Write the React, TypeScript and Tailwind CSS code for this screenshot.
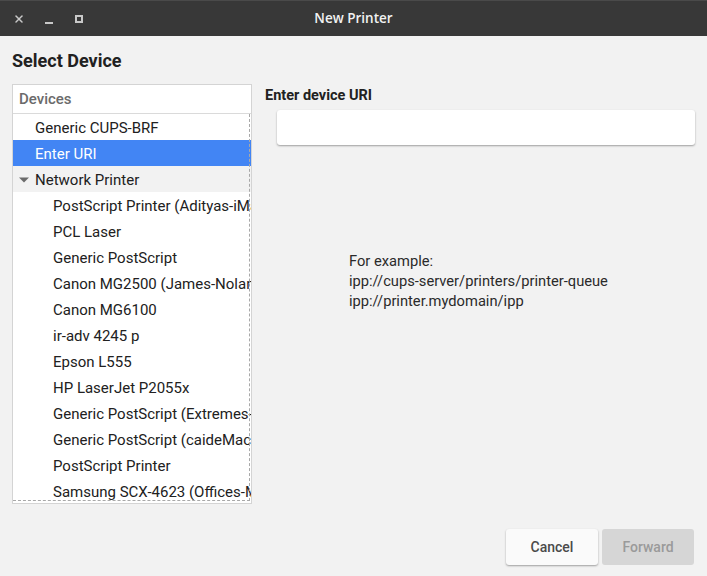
import { X } from "lucide-react";

const children = [
  "PostScript Printer (Adityas-iMac)",
  "PCL Laser",
  "Generic PostScript",
  "Canon MG2500 (James-Nolan-MacBook)",
  "Canon MG6100",
  "ir-adv 4245 p",
  "Epson L555",
  "HP LaserJet P2055x",
  "Generic PostScript (Extremes-MacBook)",
  "Generic PostScript (caideMacBook)",
  "PostScript Printer",
  "Samsung SCX-4623 (Offices-Mac)",
];

function TitleBar() {
  return (
    <div className="relative flex h-9 items-center border-t border-[#4a4a4a] bg-[#383838]">
      <div className="flex items-center gap-[16px] pl-[12px] text-[#c8c8c8]">
        <div className="flex h-[14px] w-[14px] items-center justify-center">
          <X size={12} strokeWidth={3} />
        </div>
        <div className="flex h-[14px] w-[14px] items-end justify-center pb-[2px]">
          <div className="h-[2px] w-[8px] bg-[#c8c8c8]" />
        </div>
        <div className="flex h-[14px] w-[14px] items-center justify-center">
          <div className="h-[8px] w-[8px] border-2 border-[#c8c8c8]" />
        </div>
      </div>
      <div className="absolute inset-0 flex items-center justify-center text-[13.5px] font-semibold text-[#f2f2f2] [font-family:'Open_Sans',sans-serif]">
        New Printer
      </div>
    </div>
  );
}

export default function App() {
  return (
    <div className="flex h-[576px] w-[707px] flex-col overflow-hidden bg-[#f2f2f2] text-[#212121] [font-family:Roboto,'Noto_Sans',sans-serif]">
      <TitleBar />

      <div className="flex flex-1 flex-col px-[12px]">
        <h1 className="mt-[13px] text-[18px] font-bold leading-[24px]">Select Device</h1>

        <div className="mt-[11px] flex gap-[13px]">
          <div className="relative h-[420px] w-[240px] overflow-hidden border border-[#d4d4d4] bg-white">
            <div className="flex h-[29px] items-center border-b border-[#dadada] px-[6px] pt-[1px] text-[15px] font-medium text-[#6b6b6b]">
              Devices
            </div>
            <div className="text-[15px]">
              <div className="flex h-[26px] items-center whitespace-nowrap pl-[22px] pt-[2px]">Generic CUPS-BRF</div>
              <div className="flex h-[26px] items-center whitespace-nowrap bg-[#4285f4] pl-[22px] pt-[2px] text-white">
                Enter URI
              </div>
              <div className="flex h-[26px] items-center whitespace-nowrap bg-[#f2f2f2] pl-[5px] pt-[2px]">
                <svg width="12" height="12" viewBox="0 0 12 12" className="mr-[5px]">
                  <path d="M1 3.5 L11 3.5 L6 8.5 Z" fill="#6b6b6b" />
                </svg>
                Network Printer
              </div>
              {children.map((name) => (
                <div key={name} className="flex h-[26px] items-center whitespace-nowrap pl-[40px] pt-[2px]">
                  {name}
                </div>
              ))}
            </div>
            <div className="absolute bottom-[2px] right-[1px] top-[29px] border-r border-dashed border-[#a8a8a8]" />
            <div className="absolute bottom-[2px] left-0 right-[1px] border-b border-dashed border-[#a8a8a8]" />
          </div>

          <div className="flex flex-1 flex-col">
            <div className="pt-[2px] text-[14.5px] font-bold leading-[20px]">Enter device URI</div>
            <div className="ml-[12px] mt-[4px] h-[35px] rounded-[3px] bg-white shadow-[0_1px_2px_rgba(0,0,0,0.35)]" />
            <div className="ml-[84px] mt-[106px] text-[14.7px] leading-[20px] text-[#2a2a2a]">
              <div>For example:</div>
              <div>ipp://cups-server/printers/printer-queue</div>
              <div>ipp://printer.mydomain/ipp</div>
            </div>
          </div>
        </div>

        <div className="mt-[25px] flex justify-end gap-[4px] pr-[1px]">
          <button className="h-[36px] w-[92px] rounded-[3px] bg-[#fafafa] text-[14px] font-medium text-[#4a4a4a] shadow-[0_1px_2px_rgba(0,0,0,0.35)]">
            Cancel
          </button>
          <button className="h-[36px] w-[92px] rounded-[3px] bg-[#d6d6d6] text-[14px] font-medium text-[#9a9a9a]">
            Forward
          </button>
        </div>
      </div>
    </div>
  );
}
